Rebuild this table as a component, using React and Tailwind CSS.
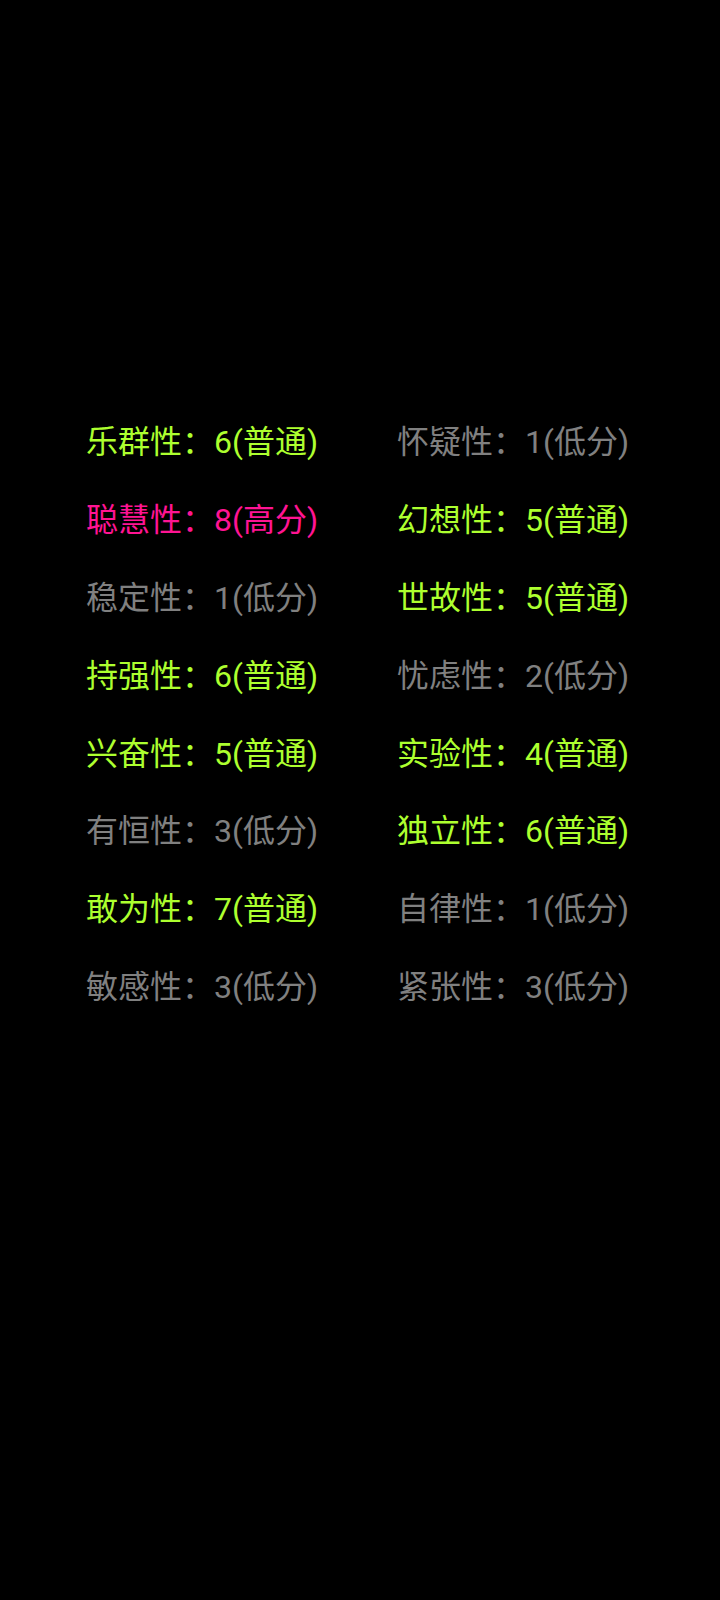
const rows = [
  [["乐群性", 6, "普通"], ["怀疑性", 1, "低分"]],
  [["聪慧性", 8, "高分"], ["幻想性", 5, "普通"]],
  [["稳定性", 1, "低分"], ["世故性", 5, "普通"]],
  [["持强性", 6, "普通"], ["忧虑性", 2, "低分"]],
  [["兴奋性", 5, "普通"], ["实验性", 4, "普通"]],
  [["有恒性", 3, "低分"], ["独立性", 6, "普通"]],
  [["敢为性", 7, "普通"], ["自律性", 1, "低分"]],
  [["敏感性", 3, "低分"], ["紧张性", 3, "低分"]],
];

const tone = {
  普通: "text-[#adff2f]",
  高分: "text-[#ff1493]",
  低分: "text-[#808080]",
};

function Trait({ name, score, level }) {
  return (
    <div className={`h-[77.9px] flex items-center whitespace-nowrap ${tone[level]}`}>
      {name}：{score}({level})
    </div>
  );
}

export default function App() {
  return (
    <div
      className="min-h-[1600px] w-[720px] bg-black pt-[403px] pl-[86px] text-[32px] leading-none"
      style={{ fontFamily: 'Roboto, "Noto Sans CJK SC", sans-serif' }}
    >
      <div className="grid grid-cols-[311px_311px]">
        {rows.map((pair, i) =>
          pair.map(([name, score, level], j) => (
            <Trait key={`${i}-${j}`} name={name} score={score} level={level} />
          ))
        )}
      </div>
    </div>
  );
}
